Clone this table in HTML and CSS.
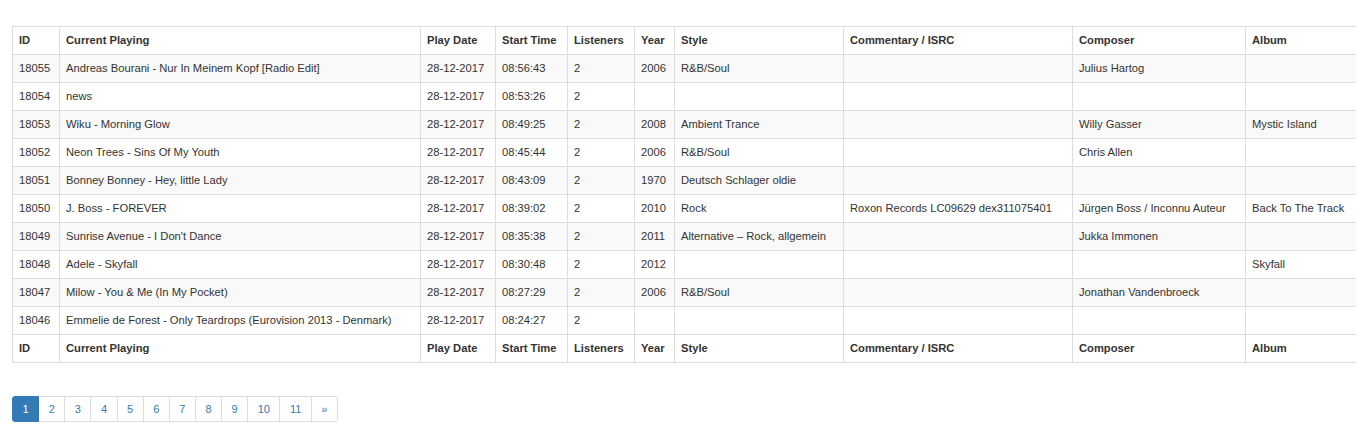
FILE: index.html
```html
<!DOCTYPE html>
<html lang="en">
<head>
<meta charset="utf-8">
<title>Playlist</title>
<link rel="stylesheet" href="styles.css">
</head>
<body>
<div class="page">
  <table class="playlist">
    <colgroup>
      <col class="c-id"><col class="c-cur"><col class="c-date"><col class="c-time"><col class="c-list"><col class="c-year"><col class="c-style"><col class="c-comm"><col class="c-comp"><col class="c-album">
    </colgroup>
    <thead>
      <tr><th>ID</th><th>Current Playing</th><th>Play Date</th><th>Start Time</th><th>Listeners</th><th>Year</th><th>Style</th><th>Commentary / ISRC</th><th>Composer</th><th>Album</th></tr>
    </thead>
    <tbody>
      <tr><td>18055</td><td>Andreas Bourani - Nur In Meinem Kopf [Radio Edit]</td><td>28-12-2017</td><td>08:56:43</td><td>2</td><td>2006</td><td>R&amp;B/Soul</td><td></td><td>Julius Hartog</td><td></td></tr>
      <tr><td>18054</td><td>news</td><td>28-12-2017</td><td>08:53:26</td><td>2</td><td></td><td></td><td></td><td></td><td></td></tr>
      <tr><td>18053</td><td>Wiku - Morning Glow</td><td>28-12-2017</td><td>08:49:25</td><td>2</td><td>2008</td><td>Ambient Trance</td><td></td><td>Willy Gasser</td><td>Mystic Island</td></tr>
      <tr><td>18052</td><td>Neon Trees - Sins Of My Youth</td><td>28-12-2017</td><td>08:45:44</td><td>2</td><td>2006</td><td>R&amp;B/Soul</td><td></td><td>Chris Allen</td><td></td></tr>
      <tr><td>18051</td><td>Bonney Bonney - Hey, little Lady</td><td>28-12-2017</td><td>08:43:09</td><td>2</td><td>1970</td><td>Deutsch Schlager oldie</td><td></td><td></td><td></td></tr>
      <tr><td>18050</td><td>J. Boss - FOREVER</td><td>28-12-2017</td><td>08:39:02</td><td>2</td><td>2010</td><td>Rock</td><td>Roxon Records LC09629 dex311075401</td><td>Jürgen Boss / Inconnu Auteur</td><td>Back To The Track</td></tr>
      <tr><td>18049</td><td>Sunrise Avenue - I Don't Dance</td><td>28-12-2017</td><td>08:35:38</td><td>2</td><td>2011</td><td>Alternative – Rock, allgemein</td><td></td><td>Jukka Immonen</td><td></td></tr>
      <tr><td>18048</td><td>Adele - Skyfall</td><td>28-12-2017</td><td>08:30:48</td><td>2</td><td>2012</td><td></td><td></td><td></td><td>Skyfall</td></tr>
      <tr><td>18047</td><td>Milow - You &amp; Me (In My Pocket)</td><td>28-12-2017</td><td>08:27:29</td><td>2</td><td>2006</td><td>R&amp;B/Soul</td><td></td><td>Jonathan Vandenbroeck</td><td></td></tr>
      <tr><td>18046</td><td>Emmelie de Forest - Only Teardrops (Eurovision 2013 - Denmark)</td><td>28-12-2017</td><td>08:24:27</td><td>2</td><td></td><td></td><td></td><td></td><td></td></tr>
    </tbody>
    <tfoot>
      <tr><th>ID</th><th>Current Playing</th><th>Play Date</th><th>Start Time</th><th>Listeners</th><th>Year</th><th>Style</th><th>Commentary / ISRC</th><th>Composer</th><th>Album</th></tr>
    </tfoot>
  </table>

  <ul class="pagination">
    <li class="active"><a href="#">1</a></li>
    <li><a href="#">2</a></li>
    <li><a href="#">3</a></li>
    <li><a href="#">4</a></li>
    <li><a href="#">5</a></li>
    <li><a href="#">6</a></li>
    <li><a href="#">7</a></li>
    <li><a href="#">8</a></li>
    <li><a href="#">9</a></li>
    <li><a href="#">10</a></li>
    <li><a href="#">11</a></li>
    <li><a href="#">&raquo;</a></li>
  </ul>
</div>
</body>
</html>
```
FILE: styles.css
```css
html, body {
  margin: 0;
  padding: 0;
  background: #fff;
}

body {
  font-family: "Liberation Sans", Arial, sans-serif;
  font-size: 11.2px;
  color: #333;
  overflow: hidden;
}

.page {
  padding: 26px 0 0 12px;
}

.playlist {
  border-collapse: collapse;
  table-layout: fixed;
  width: 1375px;
  background: #fff;
}

.c-id { width: 47px; }
.c-cur { width: 361px; }
.c-date { width: 75px; }
.c-time { width: 72px; }
.c-list { width: 67px; }
.c-year { width: 40px; }
.c-style { width: 169px; }
.c-comm { width: 229px; }
.c-comp { width: 173px; }
.c-album { width: 142px; }

.playlist th,
.playlist td {
  border: 1px solid #ddd;
  height: 28px;
  padding: 0 6px 2px;
  text-align: left;
  vertical-align: middle;
  white-space: nowrap;
  overflow: hidden;
  line-height: 16px;
  box-sizing: border-box;
}

.playlist th {
  font-weight: bold;
}

.playlist tbody tr:nth-child(odd) {
  background: #f9f9f9;
}

.pagination {
  display: flex;
  list-style: none;
  margin: 33px 0 0 0;
  padding: 0;
}

.pagination li a {
  display: block;
  font-size: 11px;
  line-height: 14px;
  padding: 5px 9.5px;
  color: #337ab7;
  text-decoration: none;
  border: 1px solid #ddd;
  margin-left: -1px;
  background: #fff;
}

.pagination li:first-child a {
  margin-left: 0;
  border-radius: 3px 0 0 3px;
}

.pagination li:last-child a {
  border-radius: 0 3px 3px 0;
}

.pagination li.active a {
  background: #337ab7;
  border-color: #337ab7;
  color: #fff;
  position: relative;
  z-index: 1;
}
```
